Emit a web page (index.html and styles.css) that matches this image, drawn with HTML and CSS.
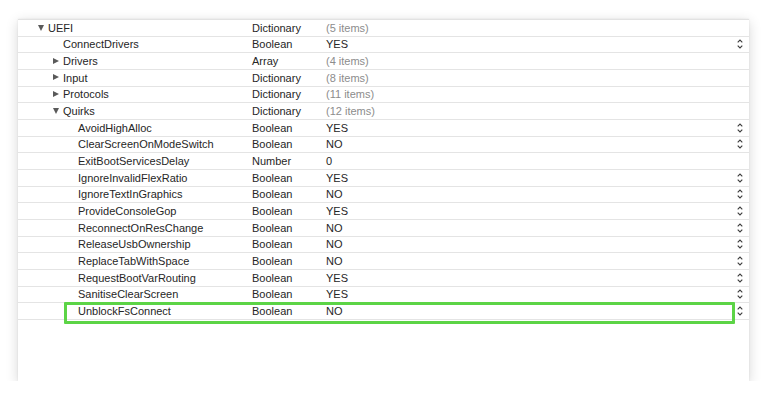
FILE: index.html
```html
<!DOCTYPE html>
<html>
<head>
<meta charset="utf-8">
<link rel="stylesheet" href="styles.css">
</head>
<body>
<div class="window">
  <div class="row"><div class="key l0"><span class="tri down"></span>UEFI</div><div class="type">Dictionary</div><div class="val dim">(5 items)</div></div>
  <div class="row"><div class="key l1"><span class="tri none"></span>ConnectDrivers</div><div class="type">Boolean</div><div class="val">YES</div><svg class="step" viewBox="0 0 6 10"><path d="M0.7 3.3L3 1L5.3 3.3M0.7 6.7L3 9L5.3 6.7"/></svg></div>
  <div class="row"><div class="key l1"><span class="tri right"></span>Drivers</div><div class="type">Array</div><div class="val dim">(4 items)</div></div>
  <div class="row"><div class="key l1"><span class="tri right"></span>Input</div><div class="type">Dictionary</div><div class="val dim">(8 items)</div></div>
  <div class="row"><div class="key l1"><span class="tri right"></span>Protocols</div><div class="type">Dictionary</div><div class="val dim">(11 items)</div></div>
  <div class="row"><div class="key l1"><span class="tri down"></span>Quirks</div><div class="type">Dictionary</div><div class="val dim">(12 items)</div></div>
  <div class="row"><div class="key l2">AvoidHighAlloc</div><div class="type">Boolean</div><div class="val">YES</div><svg class="step" viewBox="0 0 6 10"><path d="M0.7 3.3L3 1L5.3 3.3M0.7 6.7L3 9L5.3 6.7"/></svg></div>
  <div class="row"><div class="key l2">ClearScreenOnModeSwitch</div><div class="type">Boolean</div><div class="val">NO</div><svg class="step" viewBox="0 0 6 10"><path d="M0.7 3.3L3 1L5.3 3.3M0.7 6.7L3 9L5.3 6.7"/></svg></div>
  <div class="row"><div class="key l2">ExitBootServicesDelay</div><div class="type">Number</div><div class="val">0</div></div>
  <div class="row"><div class="key l2">IgnoreInvalidFlexRatio</div><div class="type">Boolean</div><div class="val">YES</div><svg class="step" viewBox="0 0 6 10"><path d="M0.7 3.3L3 1L5.3 3.3M0.7 6.7L3 9L5.3 6.7"/></svg></div>
  <div class="row"><div class="key l2">IgnoreTextInGraphics</div><div class="type">Boolean</div><div class="val">NO</div><svg class="step" viewBox="0 0 6 10"><path d="M0.7 3.3L3 1L5.3 3.3M0.7 6.7L3 9L5.3 6.7"/></svg></div>
  <div class="row"><div class="key l2">ProvideConsoleGop</div><div class="type">Boolean</div><div class="val">YES</div><svg class="step" viewBox="0 0 6 10"><path d="M0.7 3.3L3 1L5.3 3.3M0.7 6.7L3 9L5.3 6.7"/></svg></div>
  <div class="row"><div class="key l2">ReconnectOnResChange</div><div class="type">Boolean</div><div class="val">NO</div><svg class="step" viewBox="0 0 6 10"><path d="M0.7 3.3L3 1L5.3 3.3M0.7 6.7L3 9L5.3 6.7"/></svg></div>
  <div class="row"><div class="key l2">ReleaseUsbOwnership</div><div class="type">Boolean</div><div class="val">NO</div><svg class="step" viewBox="0 0 6 10"><path d="M0.7 3.3L3 1L5.3 3.3M0.7 6.7L3 9L5.3 6.7"/></svg></div>
  <div class="row"><div class="key l2">ReplaceTabWithSpace</div><div class="type">Boolean</div><div class="val">NO</div><svg class="step" viewBox="0 0 6 10"><path d="M0.7 3.3L3 1L5.3 3.3M0.7 6.7L3 9L5.3 6.7"/></svg></div>
  <div class="row"><div class="key l2">RequestBootVarRouting</div><div class="type">Boolean</div><div class="val">YES</div><svg class="step" viewBox="0 0 6 10"><path d="M0.7 3.3L3 1L5.3 3.3M0.7 6.7L3 9L5.3 6.7"/></svg></div>
  <div class="row"><div class="key l2">SanitiseClearScreen</div><div class="type">Boolean</div><div class="val">YES</div><svg class="step" viewBox="0 0 6 10"><path d="M0.7 3.3L3 1L5.3 3.3M0.7 6.7L3 9L5.3 6.7"/></svg></div>
  <div class="row highlight"><div class="key l2">UnblockFsConnect</div><div class="type">Boolean</div><div class="val">NO</div><svg class="step" viewBox="0 0 6 10"><path d="M0.7 3.3L3 1L5.3 3.3M0.7 6.7L3 9L5.3 6.7"/></svg><div class="mark"></div></div>
</div>
</body>
</html>
```
FILE: styles.css
```css
html, body {
  margin: 0;
  padding: 0;
  background: #ffffff;
}
body {
  padding: 19px 0 0 18px;
  font-family: "Liberation Sans", Arial, sans-serif;
  font-size: 11px;
  color: #262626;
}
.window {
  width: 731px;
  height: 362px;
  box-sizing: border-box;
  background: #ffffff;
  border-top: 1px solid #e2e2e2;
  box-shadow: 0 3px 12px rgba(0, 0, 0, 0.16), 0 0 2px rgba(0, 0, 0, 0.08);
}
.row {
  position: relative;
  display: flex;
  align-items: center;
  height: 16.67px;
  box-sizing: border-box;
  border-bottom: 1px solid #e4e4e4;
  white-space: nowrap;
}
.key {
  flex: none;
  width: 234px;
  box-sizing: border-box;
  display: flex;
  align-items: center;
}
.l0 { padding-left: 20px; }
.l1 { padding-left: 35px; }
.l2 { padding-left: 60px; }
.tri {
  width: 10px;
  height: 6px;
  flex: none;
  position: relative;
}
.tri.down::before {
  content: "";
  position: absolute;
  left: 0;
  top: 0;
  border-left: 3.5px solid transparent;
  border-right: 3.5px solid transparent;
  border-top: 6px solid #5a5a5a;
}
.tri.right::before {
  content: "";
  position: absolute;
  left: 0;
  top: -0.5px;
  border-top: 3.5px solid transparent;
  border-bottom: 3.5px solid transparent;
  border-left: 6px solid #5a5a5a;
}
.type {
  flex: none;
  width: 74px;
}
.val {
  flex: 1;
}
.dim {
  color: #8c8c8c;
}
.step {
  flex: none;
  width: 6px;
  height: 10px;
  margin-right: 6px;
  fill: none;
  stroke: #3c3c3c;
  stroke-width: 1.1;
}
.mark {
  position: absolute;
  left: 46px;
  top: -1px;
  width: 671px;
  height: 22px;
  box-sizing: border-box;
  border: 3px solid #5cd446;
  border-radius: 1px;
}
```
